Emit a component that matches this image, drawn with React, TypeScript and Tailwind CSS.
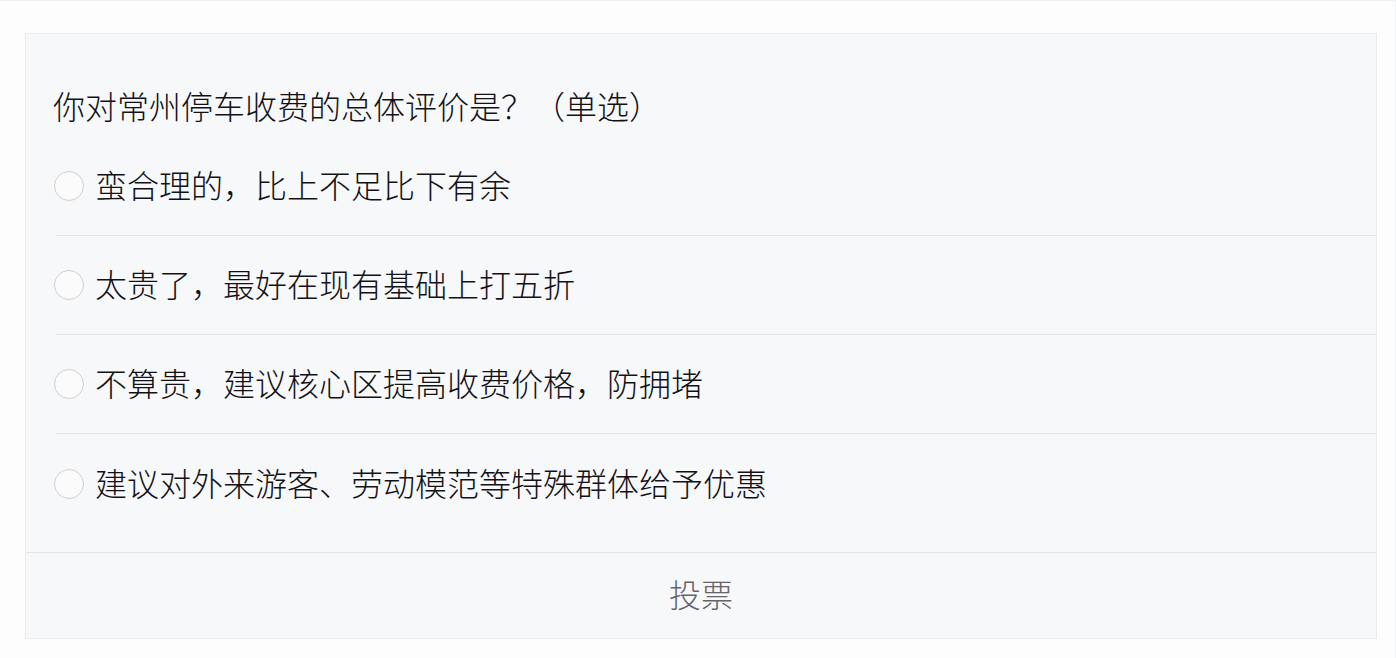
const options = [
  "蛮合理的，比上不足比下有余",
  "太贵了，最好在现有基础上打五折",
  "不算贵，建议核心区提高收费价格，防拥堵",
  "建议对外来游客、劳动模范等特殊群体给予优惠",
]

const Radio = () => (
  <span className="block w-[30px] h-[30px] shrink-0 rounded-full border border-[#cfd0d3] bg-[#fbfbfc] -ml-[2px]" />
)

export default function App() {
  return (
    <div
      className="w-[1396px] h-[658px] bg-[#fdfdfe] border-t border-r border-[#eef0f2] pt-[32px] pl-[25px] font-light"
      style={{ fontFamily: '"Noto Sans CJK SC", "Noto Sans", sans-serif' }}
    >
      <div className="w-[1352px] h-[606px] bg-[#f7f8fa] border border-[#e9ebee] flex flex-col">
        <div className="pt-[49px] pl-[27px] text-[32px] leading-[44px] text-[#121216] mb-[10px]">
          你对常州停车收费的总体评价是？（单选）
        </div>
        <div className="ml-[30px] pb-[19px]">
          {options.map((opt, i) => (
            <div
              key={i}
              className={
                "h-[99px] flex items-center gap-[11px] " +
                (i < options.length - 1 ? "border-b border-[#e3e4e7]" : "")
              }
            >
              <Radio />
              <span className="text-[32px] leading-[44px] pb-[4px] text-[#121216]">{opt}</span>
            </div>
          ))}
        </div>
        <div className="flex-1 border-t border-[#e3e4e7] flex items-center justify-center">
          <span className="text-[32px] leading-[44px] pb-[6px] text-[#66646b]">投票</span>
        </div>
      </div>
    </div>
  )
}
